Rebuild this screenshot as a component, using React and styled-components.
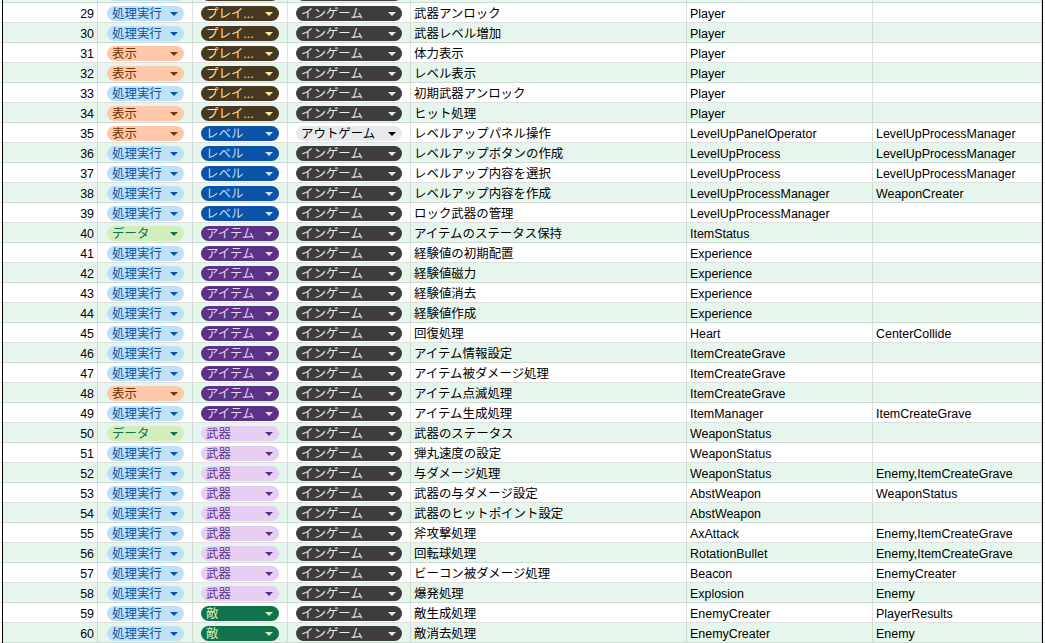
import React from "react";
import styled, { createGlobalStyle } from "styled-components";

const Global = createGlobalStyle`
  html, body { margin: 0; padding: 0; background: #fff; overflow: hidden; }
  body { font-family: "Liberation Sans", "Noto Sans CJK JP", sans-serif; font-size: 12.45px; color: #000; }
`;

const Viewport = styled.div`
  width: 1045px;
  height: 643px;
  overflow: hidden;
  padding: 0 2px;
  box-sizing: border-box;
  background: repeating-linear-gradient(to bottom, transparent 0 2px, #dcdcdc 2px 3px, transparent 3px 20px);
`;
const Sheet = styled.div`
  width: 1041px;
  height: 643px;
  overflow: hidden;
  border-left: 1px solid #000;
  border-right: 1px solid #000;
  box-sizing: border-box;
`;
const Table = styled.div`
  margin-top: -17px;
`;
const Row = styled.div`
  display: grid;
  grid-template-columns: 95px 95px 95px 123px 276px 186px 1fr;
  height: 20px;
  box-sizing: border-box;
  border-bottom: 1px solid ${(p) => (p.$alt ? "#ccdcd2" : "#e0e0e0")};
  background: ${(p) => (p.$alt ? "#e7f6ec" : "#fff")};
`;
const Cell = styled.div`
  border-right: 1px solid ${(p) => (p.$alt ? "#ccdcd2" : "#e0e0e0")};
  padding: 1px 3px 0;
  line-height: 20px;
  height: 19px;
  box-sizing: border-box;
  white-space: nowrap;
  overflow: hidden;
`;
const NumCell = styled(Cell)`
  text-align: right;
`;
const ChipCell = styled(Cell)`
  padding: 3px 8px 0 ${(p) => (p.$first ? 9 : 8)}px;
`;
const Chip = styled.div`
  display: flex;
  align-items: center;
  justify-content: space-between;
  height: 15px;
  border-radius: 8px;
  padding: 0 6px 0 5px;
  background: ${(p) => p.$bg};
  color: ${(p) => p.$fg};
  line-height: 16px;
`;
const ChipLabel = styled.span`
  flex: 1;
  min-width: 0;
  padding-top: 1px;
  white-space: nowrap;
`;
const Caret = styled.i`
  flex: none;
  margin-left: 4px;
  width: 0;
  height: 0;
  border-left: 4px solid transparent;
  border-right: 4px solid transparent;
  border-top: 4px solid ${(p) => p.$color};
`;

const TYPE = {
  処理実行: ["#bfe1f6", "#0a53a8"],
  表示: ["#ffc8aa", "#753800"],
  データ: ["#d4edbc", "#11734b"],
};
const OWNER = {
  "プレイ...": ["#473821", "#ffe5a0"],
  レベル: ["#0a53a8", "#bfe1f6"],
  アイテム: ["#5a3286", "#e6cff2"],
  武器: ["#e6cff2", "#5a3286"],
  敵: ["#11734b", "#d4edbc"],
};
const SCENE = {
  インゲーム: ["#3d3d3d", "#e8eaed"],
  アウトゲーム: ["#e8eaed", "#000000"],
};

const P = "処理実行", V = "表示", D = "データ";
const PL = "プレイ...", L = "レベル", I = "アイテム", W = "武器", E = "敵";

const rows = [
  [29, P, PL, "武器アンロック", "Player", ""],
  [30, P, PL, "武器レベル増加", "Player", ""],
  [31, V, PL, "体力表示", "Player", ""],
  [32, V, PL, "レベル表示", "Player", ""],
  [33, P, PL, "初期武器アンロック", "Player", ""],
  [34, V, PL, "ヒット処理", "Player", ""],
  [35, V, L, "レベルアップパネル操作", "LevelUpPanelOperator", "LevelUpProcessManager", "アウトゲーム"],
  [36, P, L, "レベルアップボタンの作成", "LevelUpProcess", "LevelUpProcessManager"],
  [37, P, L, "レベルアップ内容を選択", "LevelUpProcess", "LevelUpProcessManager"],
  [38, P, L, "レベルアップ内容を作成", "LevelUpProcessManager", "WeaponCreater"],
  [39, P, L, "ロック武器の管理", "LevelUpProcessManager", ""],
  [40, D, I, "アイテムのステータス保持", "ItemStatus", ""],
  [41, P, I, "経験値の初期配置", "Experience", ""],
  [42, P, I, "経験値磁力", "Experience", ""],
  [43, P, I, "経験値消去", "Experience", ""],
  [44, P, I, "経験値作成", "Experience", ""],
  [45, P, I, "回復処理", "Heart", "CenterCollide"],
  [46, P, I, "アイテム情報設定", "ItemCreateGrave", ""],
  [47, P, I, "アイテム被ダメージ処理", "ItemCreateGrave", ""],
  [48, V, I, "アイテム点滅処理", "ItemCreateGrave", ""],
  [49, P, I, "アイテム生成処理", "ItemManager", "ItemCreateGrave"],
  [50, D, W, "武器のステータス", "WeaponStatus", ""],
  [51, P, W, "弾丸速度の設定", "WeaponStatus", ""],
  [52, P, W, "与ダメージ処理", "WeaponStatus", "Enemy,ItemCreateGrave"],
  [53, P, W, "武器の与ダメージ設定", "AbstWeapon", "WeaponStatus"],
  [54, P, W, "武器のヒットポイント設定", "AbstWeapon", ""],
  [55, P, W, "斧攻撃処理", "AxAttack", "Enemy,ItemCreateGrave"],
  [56, P, W, "回転球処理", "RotationBullet", "Enemy,ItemCreateGrave"],
  [57, P, W, "ビーコン被ダメージ処理", "Beacon", "EnemyCreater"],
  [58, P, W, "爆発処理", "Explosion", "Enemy"],
  [59, P, E, "敵生成処理", "EnemyCreater", "PlayerResults"],
  [60, P, E, "敵消去処理", "EnemyCreater", "Enemy"],
];

function Pill({ label, palette, text = label }) {
  const [bg, fg] = palette[label];
  return (
    <Chip $bg={bg} $fg={fg}>
      <ChipLabel>{text}</ChipLabel>
      <Caret $color={fg} />
    </Chip>
  );
}

/* The row scrolled almost out of view: only the bottom of its chips shows. */
function ClippedRow() {
  return (
    <Row $alt>
      <NumCell $alt />
      <ChipCell $alt $first><Pill label={P} palette={TYPE} text="" /></ChipCell>
      <ChipCell $alt><Pill label={PL} palette={OWNER} text="" /></ChipCell>
      <ChipCell $alt><Pill label="インゲーム" palette={SCENE} text="" /></ChipCell>
      <Cell $alt />
      <Cell $alt />
      <Cell $alt />
    </Row>
  );
}

export default function App() {
  return (
    <Viewport>
      <Global />
      <Sheet>
        <Table>
          <ClippedRow />
          {rows.map(([n, type, owner, desc, cls, dep, scene = "インゲーム"]) => {
            const alt = n % 2 === 0;
            return (
              <Row key={n} $alt={alt}>
                <NumCell $alt={alt}>{n}</NumCell>
                <ChipCell $alt={alt} $first><Pill label={type} palette={TYPE} /></ChipCell>
                <ChipCell $alt={alt}><Pill label={owner} palette={OWNER} /></ChipCell>
                <ChipCell $alt={alt}><Pill label={scene} palette={SCENE} /></ChipCell>
                <Cell $alt={alt}>{desc}</Cell>
                <Cell $alt={alt}>{cls}</Cell>
                <Cell $alt={alt}>{dep}</Cell>
              </Row>
            );
          })}
        </Table>
      </Sheet>
    </Viewport>
  );
}
